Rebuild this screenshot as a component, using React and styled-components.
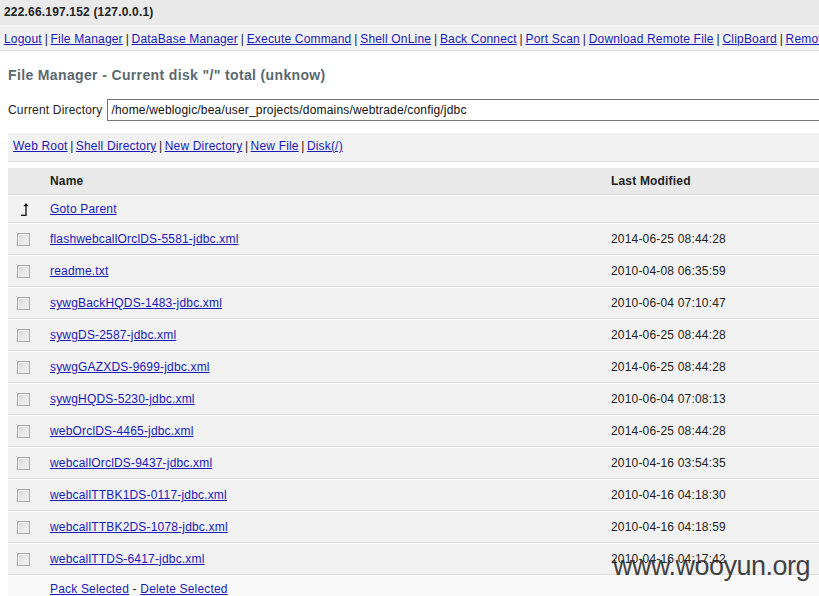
import styled, { createGlobalStyle } from "styled-components";

const GlobalStyle = createGlobalStyle`
  html, body {
    margin: 0;
    padding: 0;
    overflow: hidden;
    background: #fff;
  }
  body {
    font: 12px/16px "Liberation Sans", Arial, sans-serif;
    letter-spacing: 0.18px;
    color: #222;
  }
`;

const Page = styled.div`
  position: relative;
  width: 1100px;
`;

const HostBar = styled.div`
  height: 16px;
  padding: 4px 4px;
  background: #e9e9e9;
  border-bottom: 1px solid #e2e2e2;
  font-weight: bold;
`;

const MenuBar = styled.div`
  height: 16px;
  padding: 5px 4px 3px;
  background: #f1f1f1;
  border-top: 1px solid #fff;
  border-bottom: 1px solid #ddd;
  white-space: nowrap;
`;

const Link = styled.a`
  color: #1a1ab4;
  text-decoration: underline;
  cursor: pointer;
`;

const Sep = styled.span`
  letter-spacing: 0;
  word-spacing: ${(p) => p.$tight || "-0.5px"};
`;

const Content = styled.div`
  padding-left: 8px;
`;

const Title = styled.h2`
  margin: 12px 0 0;
  height: 24px;
  line-height: 24px;
  font-size: 14px;
  font-weight: bold;
  letter-spacing: 0.36px;
  color: #5b686f;
`;

const DirRow = styled.div`
  display: flex;
  align-items: center;
  gap: 5px;
  margin-top: 12px;
  white-space: nowrap;
`;

const DirLabel = styled.span`
  flex-shrink: 0;
`;

const DirInput = styled.input`
  flex-shrink: 0;
  box-sizing: border-box;
  width: 1000px;
  height: 22px;
  padding: 0 3px;
  border: 1px solid #767676;
  font: 12px "Liberation Sans", Arial, sans-serif;
  letter-spacing: 0.18px;
  color: #111;
  outline: none;
`;

const ActionBar = styled.div`
  margin-top: 11px;
  height: 16px;
  padding: 5px 5px 7px;
  background: #f1f1f1;
  border-top: 1px solid #fff;
  border-bottom: 1px solid #ddd;
`;

const Table = styled.table`
  margin-top: 5px;
  width: 1092px;
  border-spacing: 0;
  table-layout: fixed;
`;

const Cell = styled.td`
  height: ${(p) => (p.$tall ? 20 : 16)}px;
  padding: 5px;
  border-top: 1px solid #fff;
  border-bottom: 1px solid #ddd;
  background: ${(p) => p.$bg || "#f1f1f1"};
  font-weight: ${(p) => (p.$bold ? "bold" : "normal")};
  vertical-align: middle;
  white-space: nowrap;
`;

const Check = styled.input.attrs({ type: "checkbox" })`
  appearance: none;
  box-sizing: border-box;
  display: block;
  width: 13px;
  height: 13px;
  margin: 0 0 0 4px;
  border: 1px solid #a9a9a9;
  background: linear-gradient(135deg, #d8d8d8, #f4f4f4);
  box-shadow: inset 0 0 0 1px #ececec;
`;

const Watermark = styled.div`
  position: absolute;
  left: 613px;
  top: 553px;
  font: 27px/27px "Liberation Sans", Arial, sans-serif;
  letter-spacing: -0.5px;
  color: rgba(40, 40, 40, 0.88);
  pointer-events: none;
`;

const ParentIcon = () => (
  <svg width="10" height="14" viewBox="0 0 10 14" style={{ display: "block", marginLeft: 7 }}>
    <path d="M6 13V2.5" stroke="#111" strokeWidth="1.3" fill="none" />
    <path d="M1 13.3H6.6" stroke="#111" strokeWidth="1.3" fill="none" />
    <path d="M3.6 4.2L6 1L8.4 4.2Z" fill="#111" />
  </svg>
);

const menu = [
  "Logout",
  "File Manager",
  "DataBase Manager",
  "Execute Command",
  "Shell OnLine",
  "Back Connect",
  "Port Scan",
  "Download Remote File",
  "ClipBoard",
  "Remote Control",
];

const actions = ["Web Root", "Shell Directory", "New Directory", "New File", "Disk(/)"];

const files = [
  ["flashwebcallOrclDS-5581-jdbc.xml", "2014-06-25 08:44:28"],
  ["readme.txt", "2010-04-08 06:35:59"],
  ["sywgBackHQDS-1483-jdbc.xml", "2010-06-04 07:10:47"],
  ["sywgDS-2587-jdbc.xml", "2014-06-25 08:44:28"],
  ["sywgGAZXDS-9699-jdbc.xml", "2014-06-25 08:44:28"],
  ["sywgHQDS-5230-jdbc.xml", "2010-06-04 07:08:13"],
  ["webOrclDS-4465-jdbc.xml", "2014-06-25 08:44:28"],
  ["webcallOrclDS-9437-jdbc.xml", "2010-04-16 03:54:35"],
  ["webcallTTBK1DS-0117-jdbc.xml", "2010-04-16 04:18:30"],
  ["webcallTTBK2DS-1078-jdbc.xml", "2010-04-16 04:18:59"],
  ["webcallTTDS-6417-jdbc.xml", "2010-04-16 04:17:42"],
];

const joinLinks = (items, tight) =>
  items.map((label, i) => (
    <span key={label}>
      {i > 0 && <Sep $tight={tight}> | </Sep>}
      <Link>{label}</Link>
    </span>
  ));

export default function App() {
  return (
    <Page>
      <GlobalStyle />
      <HostBar>222.66.197.152 (127.0.0.1)</HostBar>
      <MenuBar>{joinLinks(menu)}</MenuBar>
      <Content>
        <Title>File Manager - Current disk "/" total (unknow)</Title>
        <DirRow>
          <DirLabel>Current Directory</DirLabel>
          <DirInput defaultValue="/home/weblogic/bea/user_projects/domains/webtrade/config/jdbc" />
        </DirRow>
        <ActionBar>{joinLinks(actions, "-0.8px")}</ActionBar>
        <Table>
          <colgroup>
            <col style={{ width: 37 }} />
            <col style={{ width: 561 }} />
            <col />
          </colgroup>
          <tbody>
            <tr>
              <Cell $bg="#e9e9e9" />
              <Cell $bg="#e9e9e9" $bold>Name</Cell>
              <Cell $bg="#e9e9e9" $bold>Last Modified</Cell>
            </tr>
            <tr>
              <Cell><ParentIcon /></Cell>
              <Cell><Link>Goto Parent</Link></Cell>
              <Cell />
            </tr>
            {files.map(([name, date]) => (
              <tr key={name}>
                <Cell $tall><Check /></Cell>
                <Cell $tall><Link>{name}</Link></Cell>
                <Cell $tall>{date}</Cell>
              </tr>
            ))}
            <tr>
              <Cell $bg="#f9f9f9" />
              <Cell $bg="#f9f9f9" colSpan={2}>
                <Link>Pack Selected</Link> - <Link>Delete Selected</Link>
              </Cell>
            </tr>
          </tbody>
        </Table>
      </Content>
      <Watermark>www.wooyun.org</Watermark>
    </Page>
  );
}
